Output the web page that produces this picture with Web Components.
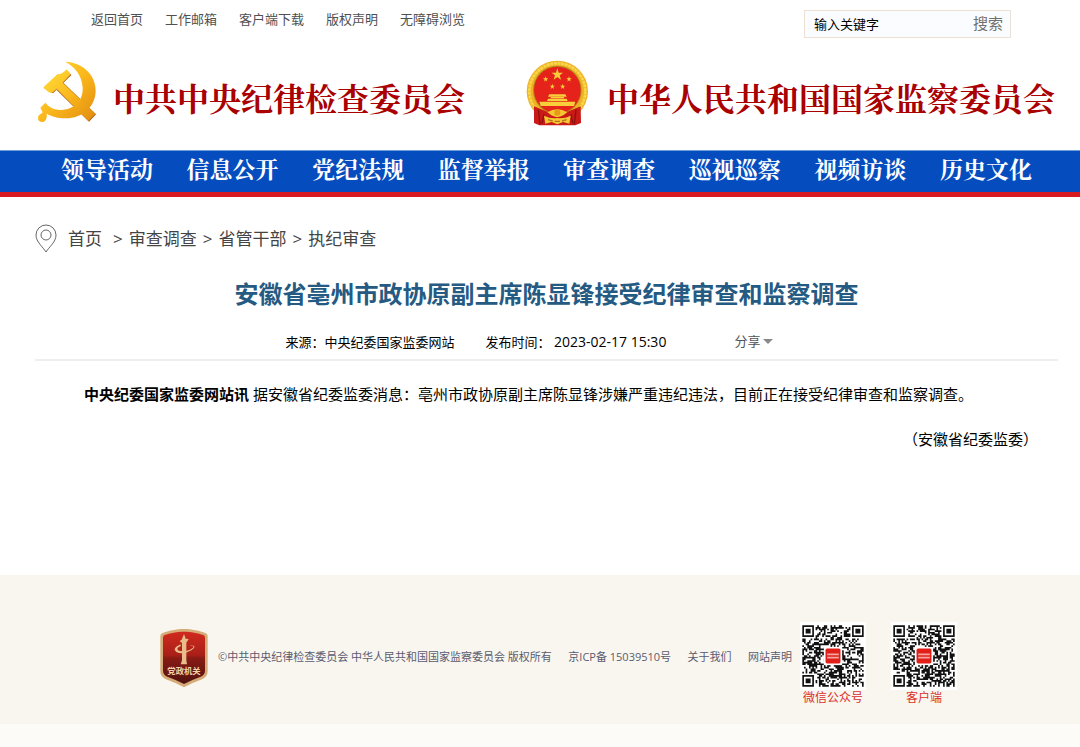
<!DOCTYPE html>
<html lang="zh-CN">
<head>
<meta charset="UTF-8">
<meta name="viewport" content="width=device-width, initial-scale=1">
<title>安徽省亳州市政协原副主席陈显锋接受纪律审查和监察调查</title>
<style>
  :root {
    --blue: #054dbf;
    --red: #d71920;
    --song: "Noto Serif CJK SC", "Source Han Serif SC", "Noto Sans CJK SC", serif;
  }
  body {
    margin: 0;
    background: #fff;
    color: #000;
    font-family: "Open Sans", "Noto Sans CJK SC", sans-serif;
    font-size: 13px;
    line-height: 20px;
  }
  .brands {
    display: flex;
    flex-wrap: wrap;
    justify-content: space-between;
    padding: 17px 25px 20px 30px;
  }
</style>
</head>
<body>
  <top-bar></top-bar>

  <div class="brands">
    <brand-logo>
      <svg slot="emblem" viewBox="0 0 225 225" width="75" height="75" aria-hidden="true">
        <defs>
          <linearGradient id="gold" x1="0" y1="0" x2="1" y2="1">
            <stop offset="0" stop-color="#ffe03a"/>
            <stop offset=".5" stop-color="#fbb81c"/>
            <stop offset="1" stop-color="#e08a10"/>
          </linearGradient>
        </defs>
        <g fill="#a85a12" transform="translate(2 2)">
          <path d="M40 97L83 59Q94 60 110 45L122 58L67 113L58 109Z"/>
          <path d="M99 82L196 176L175 198L78 103Z"/>
        </g>
        <g fill="url(#gold)">
          <path d="M106 20C160 22 198 62 197 108C196 156 156 190 108 190C84 190 64 184 50 176C52 190 46 201 36 201C22 201 20 182 32 177L38 172L31 158L46 143C60 160 80 167 100 164C138 160 160 132 158 98C156 62 136 36 106 20Z"/>
          <path d="M40 97L83 57Q95 60 110 43L122 58L98 83L196 176L175 198L80 101L67 113Q60 114 54 110Z"/>
        </g>
      </svg>
      中共中央纪律检查委员会
    </brand-logo>
    <brand-logo>
      <svg slot="emblem" viewBox="12 0 225 225" width="75" height="75" aria-hidden="true">
        <circle cx="112" cy="109" r="92" fill="#eeb226"/>
        <circle cx="112" cy="109" r="84" fill="none" stroke="#f9d64a" stroke-width="8" stroke-dasharray="9 2"/>
        <circle cx="112" cy="105" r="73" fill="#b98518"/>
        <circle cx="112" cy="105" r="70" fill="#e5231b"/>
        <g fill="#f8cf3a">
          <path d="M112 40L116 53L129 53L119 61L123 74L112 66L101 74L105 61L95 53L108 53Z"/>
          <path d="M77 64L79 70L85 70L80 74L82 80L77 76L72 80L74 74L69 70L75 70Z"/>
          <path d="M147 64L149 70L155 70L150 74L152 80L147 76L142 80L144 74L139 70L145 70Z"/>
          <path d="M97 86L99 92L105 92L100 96L102 102L97 98L92 102L94 96L89 92L95 92Z"/>
          <path d="M128 86L130 92L136 92L131 96L133 102L128 98L123 102L125 96L120 92L126 92Z"/>
          <path d="M88 118H136L140 125H84ZM92 126H132V130H92ZM84 131H140L143 138H81ZM58 140H166L162 153H62Z"/>
        </g>
        <path d="M42 154L76 168Q112 188 148 168L182 154L183 204L166 211H58L42 204Z" fill="#c91a18"/>
        <path d="M55 164L60 208M168 164L163 208M72 178L66 205M153 178L158 205" stroke="#90100f" stroke-width="4"/>
        <path d="M82 172Q112 154 142 172L130 181Q112 192 94 181Z" fill="#f4c62f"/>
        <circle cx="112" cy="173" r="9" fill="#e79a19"/>
        <path d="M72 182Q92 192 112 189Q132 192 152 182L148 206L129 201L112 208L95 201L76 206Z" fill="#f5c932"/>
        <path d="M84 194L98 198M140 194L126 198M104 199H120" stroke="#bd741b" stroke-width="4"/>
      </svg>
      中华人民共和国国家监察委员会
    </brand-logo>
  </div>

  <site-nav items="领导活动,信息公开,党纪法规,监督举报,审查调查,巡视巡察,视频访谈,历史文化"></site-nav>

  <news-article>
    <bread-crumb slot="crumb" items="首页,审查调查,省管干部,执纪审查"></bread-crumb>
    <span slot="title">安徽省亳州市政协原副主席陈显锋接受纪律审查和监察调查</span>
    <span slot="source">中央纪委国家监委网站</span>
    <time slot="time" datetime="2023-02-17T15:30">2023-02-17 15:30</time>
    <strong>中央纪委国家监委网站讯</strong> 据安徽省纪委监委消息：亳州市政协原副主席陈显锋涉嫌严重违纪违法，目前正在接受纪律审查和监察调查。
    <span slot="sign">（安徽省纪委监委）</span>
  </news-article>

  <site-footer>
    <qr-code slot="codes" seed="7">微信公众号</qr-code>
    <qr-code slot="codes" seed="23">客户端</qr-code>
  </site-footer>

<script>
  // crea el shadow root abierto con su contenido
  function render(el, html) {
    el.attachShadow({ mode: "open" }).innerHTML = html;
  }

  function getItems(el) {
    return el.getAttribute("items").split(",");
  }

  class TopBar extends HTMLElement {
    connectedCallback() {
      const links = ["返回首页", "工作邮箱", "客户端下载", "版权声明", "无障碍浏览"];
      render(this, `
        <style>
          :host {
            display: flex;
            flex-wrap: wrap;
            justify-content: space-between;
            padding: 10px 69px 0 91px;
          }
          nav { display: flex; flex-wrap: wrap; gap: 22px; line-height: 18px; }
          a { color: #505050; text-decoration: none; }
          a:hover { color: #c00; }
        </style>
        <nav>${links.map(t => `<a href="#">${t}</a>`).join("")}</nav>
        <search-box></search-box>
      `);
    }
  }

  class SearchBox extends HTMLElement {
    connectedCallback() {
      render(this, `
        <style>
          :host { display: block; }
          form {
            display: flex;
            box-sizing: border-box;
            width: 207px;
            height: 28px;
            border: 1px solid #ecdfd3;
            background: #fbfcff;
          }
          input, button {
            border: 0;
            background: none;
            font-family: inherit;
            outline: none;
          }
          input { flex: 1; min-width: 0; padding: 0 9px 2px; font-size: 13px; color: #000; }
          button { padding: 0 7px 2px; font-size: 15px; line-height: 24px; color: #707070; cursor: pointer; }
        </style>
        <form>
          <input type="text" value="输入关键字" aria-label="输入关键字">
          <button type="button">搜索</button>
        </form>
      `);
    }
  }

  class BrandLogo extends HTMLElement {
    connectedCallback() {
      render(this, `
        <style>
          :host { display: block; }
          a {
            display: flex;
            gap: 8px;
            color: #a90000;
            font: bold 32px/84px var(--song);
            height: 75px;
            text-decoration: none;
            white-space: nowrap;
          }
        </style>
        <a href="#"><slot name="emblem"></slot><span><slot></slot></span></a>
      `);
    }
  }

  class SiteNav extends HTMLElement {
    connectedCallback() {
      render(this, `
        <style>
          :host {
            display: block;
            background: var(--blue);
            border-top: 1px solid #6b9ddb;
            border-bottom: 5px solid var(--red);
          }
          nav {
            display: flex;
            flex-wrap: wrap;
            justify-content: space-between;
            padding: 0 48px 5px 61px;
          }
          a { color: #fff; font: bold 23px/36px var(--song); text-decoration: none; }
        </style>
        <nav>${getItems(this).map(t => `<a href="#">${t}</a>`).join("")}</nav>
      `);
    }
  }

  class BreadCrumb extends HTMLElement {
    connectedCallback() {
      render(this, `
        <style>
          :host { display: block; }
          nav {
            display: flex;
            flex-wrap: wrap;
            align-items: center;
            gap: 6px;
            font-size: 17px;
            line-height: 30px;
            color: #444;
          }
          svg { margin-right: 5px; }
          a { color: inherit; text-decoration: none; }
          a:first-of-type { margin-right: 5px; }
        </style>
        <nav>
          <svg width="22" height="30" viewBox="0 0 22 30" fill="none" stroke="#666" aria-hidden="true">
            <path d="M11 28C8 23 1 18 1 11A10 10 0 0 1 21 11C21 18 14 23 11 28Z"/>
            <circle cx="11" cy="11" r="5"/>
          </svg>
          ${getItems(this).map(t => `<a href="#">${t}</a>`).join("<span>&gt;</span>")}
        </nav>
      `);
    }
  }

  class NewsArticle extends HTMLElement {
    connectedCallback() {
      render(this, `
        <style>
          :host { display: block; padding: 27px 22px 121px 35px; }
          h1 {
            margin: 22px 0 20px;
            font-size: 24px;
            line-height: 36px;
            text-align: center;
            color: #255a82;
          }
          .meta {
            display: flex;
            flex-wrap: wrap;
            align-items: flex-start;
            justify-content: center;
            padding: 0 34px 7px 0;
            border-bottom: 2px solid #eee;
          }
          .time { margin-left: 31px; }
          ::slotted(time) { font-size: 14px; }
          button {
            display: flex;
            align-items: center;
            gap: 3px;
            margin-left: 68px;
            padding: 0;
            border: 0;
            background: none;
            font: inherit;
            line-height: 18px;
            color: #555;
          }
          .arrow { border: 5px solid transparent; border-top-color: #888; border-bottom: 0; }
          p { margin: 18px 49px 0; font-size: 15px; line-height: 30px; }
          .sign { margin: 15px 20px 0; text-align: right; }
        </style>
        <slot name="crumb"></slot>
        <h1><slot name="title"></slot></h1>
        <div class="meta">
          <span>来源：<slot name="source"></slot></span>
          <span class="time">发布时间： <slot name="time"></slot></span>
          <button type="button">分享<span class="arrow"></span></button>
        </div>
        <p><slot></slot></p>
        <p class="sign"><slot name="sign"></slot></p>
      `);
    }
  }

  class QrCode extends HTMLElement {
    connectedCallback() {
      render(this, `
        <style>
          :host {
            display: block;
            width: 66px;
            text-align: center;
            white-space: nowrap;
            font-size: 12px;
            line-height: 16px;
            color: #d9302c;
          }
          svg { display: block; background: #fff; }
        </style>
        <svg width="66" height="68" viewBox="-1 -2 39 41" aria-hidden="true">
          <path d="${this.modules()}" fill="#111"/>
          <rect x="13" y="13" width="11" height="11" fill="#fff"/>
          <rect x="14" y="14" width="9" height="9" rx="1" fill="#e01f19"/>
          <path d="M15 17h7v1h-7zM15 19h7v1h-7z" fill="#f5a59f"/>
        </svg>
        <slot></slot>
      `);
    }

    // patrón de 37x37 con los tres cuadros de las esquinas
    modules() {
      const n = 37;
      let seed = Number(this.getAttribute("seed"));
      let d = "";
      for (let y = 0; y < n; y++) {
        let run = 0;
        for (let x = 0; x < n; x++) {
          seed = (seed * 16807) % 2147483647;
          let on = seed / 2147483647 < 0.55;
          const right = x > n - 9, bottom = y > n - 9;
          if ((x < 8 && y < 8) || (right && y < 8) || (x < 8 && bottom)) {
            const r = Math.max(Math.abs((right ? x - n + 7 : x) - 3), Math.abs((bottom ? y - n + 7 : y) - 3));
            on = r === 3 || r < 2;
          }
          if (on) run++;
          if (run && (!on || x === n - 1)) {
            d += `M${(on ? x + 1 : x) - run} ${y}h${run}v1h-${run}z`;
            run = 0;
          }
        }
      }
      return d;
    }
  }

  class SiteFooter extends HTMLElement {
    connectedCallback() {
      render(this, `
        <style>
          :host { display: block; background: #fcfbf8; padding-bottom: 23px; }
          footer {
            display: flex;
            flex-wrap: wrap;
            align-items: center;
            padding: 47px 123px 18px 160px;
            background: #f9f6ef;
          }
          .seal { margin: 0 10px 12px 0; }
          .legal {
            display: flex;
            flex: 1;
            flex-wrap: wrap;
            justify-content: space-between;
            margin: 0 8px 14px 0;
            font-size: 11px;
            color: #5a5c70;
          }
          a { color: inherit; text-decoration: none; }
          .codes { display: flex; gap: 25px; }
        </style>
        <footer>
          <svg class="seal" width="48" height="60" viewBox="30 25 144 180" aria-hidden="true">
            <defs>
              <linearGradient id="shield" x1="0" y1="0" x2="0" y2="1">
                <stop offset="0" stop-color="#d12a1e"/>
                <stop offset=".45" stop-color="#a81f18"/>
                <stop offset=".5" stop-color="#8a1b15"/>
                <stop offset="1" stop-color="#4f120f"/>
              </linearGradient>
            </defs>
            <path d="M102 28C125 28 150 34 166 40Q173 43 173 50V155Q173 170 158 178Q125 190 102 203Q79 190 46 178Q31 170 31 155V50Q31 43 38 40C54 34 79 28 102 28Z" fill="#d5ab78"/>
            <path d="M102 36C122 36 145 41 160 46Q165 48 165 54V153Q165 165 152 171Q124 181 102 193Q80 181 52 171Q39 165 39 153V54Q39 48 44 46C59 41 82 36 102 36Z" fill="url(#shield)"/>
            <path d="M95 60L102 43L107 57L116 58L109 69V122L111 134H92L96 122V70L89 64Z" fill="#e8bd8b"/>
            <path d="M92 74Q64 86 79 97Q98 107 124 92Q146 76 118 78Q142 78 120 90Q98 98 84 92Q78 84 92 80Z" fill="#e8bd8b"/>
            <text x="102" y="164" text-anchor="middle" font-size="25" font-weight="bold" fill="#f2d3a8">党政机关</text>
          </svg>
          <div class="legal">
            <span>©中共中央纪律检查委员会 中华人民共和国国家监察委员会 版权所有</span>
            <a href="#">京ICP备 15039510号</a>
            <a href="#">关于我们</a>
            <a href="#">网站声明</a>
          </div>
          <div class="codes"><slot name="codes"></slot></div>
        </footer>
      `);
    }
  }

  customElements.define("top-bar", TopBar);
  customElements.define("search-box", SearchBox);
  customElements.define("brand-logo", BrandLogo);
  customElements.define("site-nav", SiteNav);
  customElements.define("bread-crumb", BreadCrumb);
  customElements.define("news-article", NewsArticle);
  customElements.define("qr-code", QrCode);
  customElements.define("site-footer", SiteFooter);
</script>
</body>
</html>
